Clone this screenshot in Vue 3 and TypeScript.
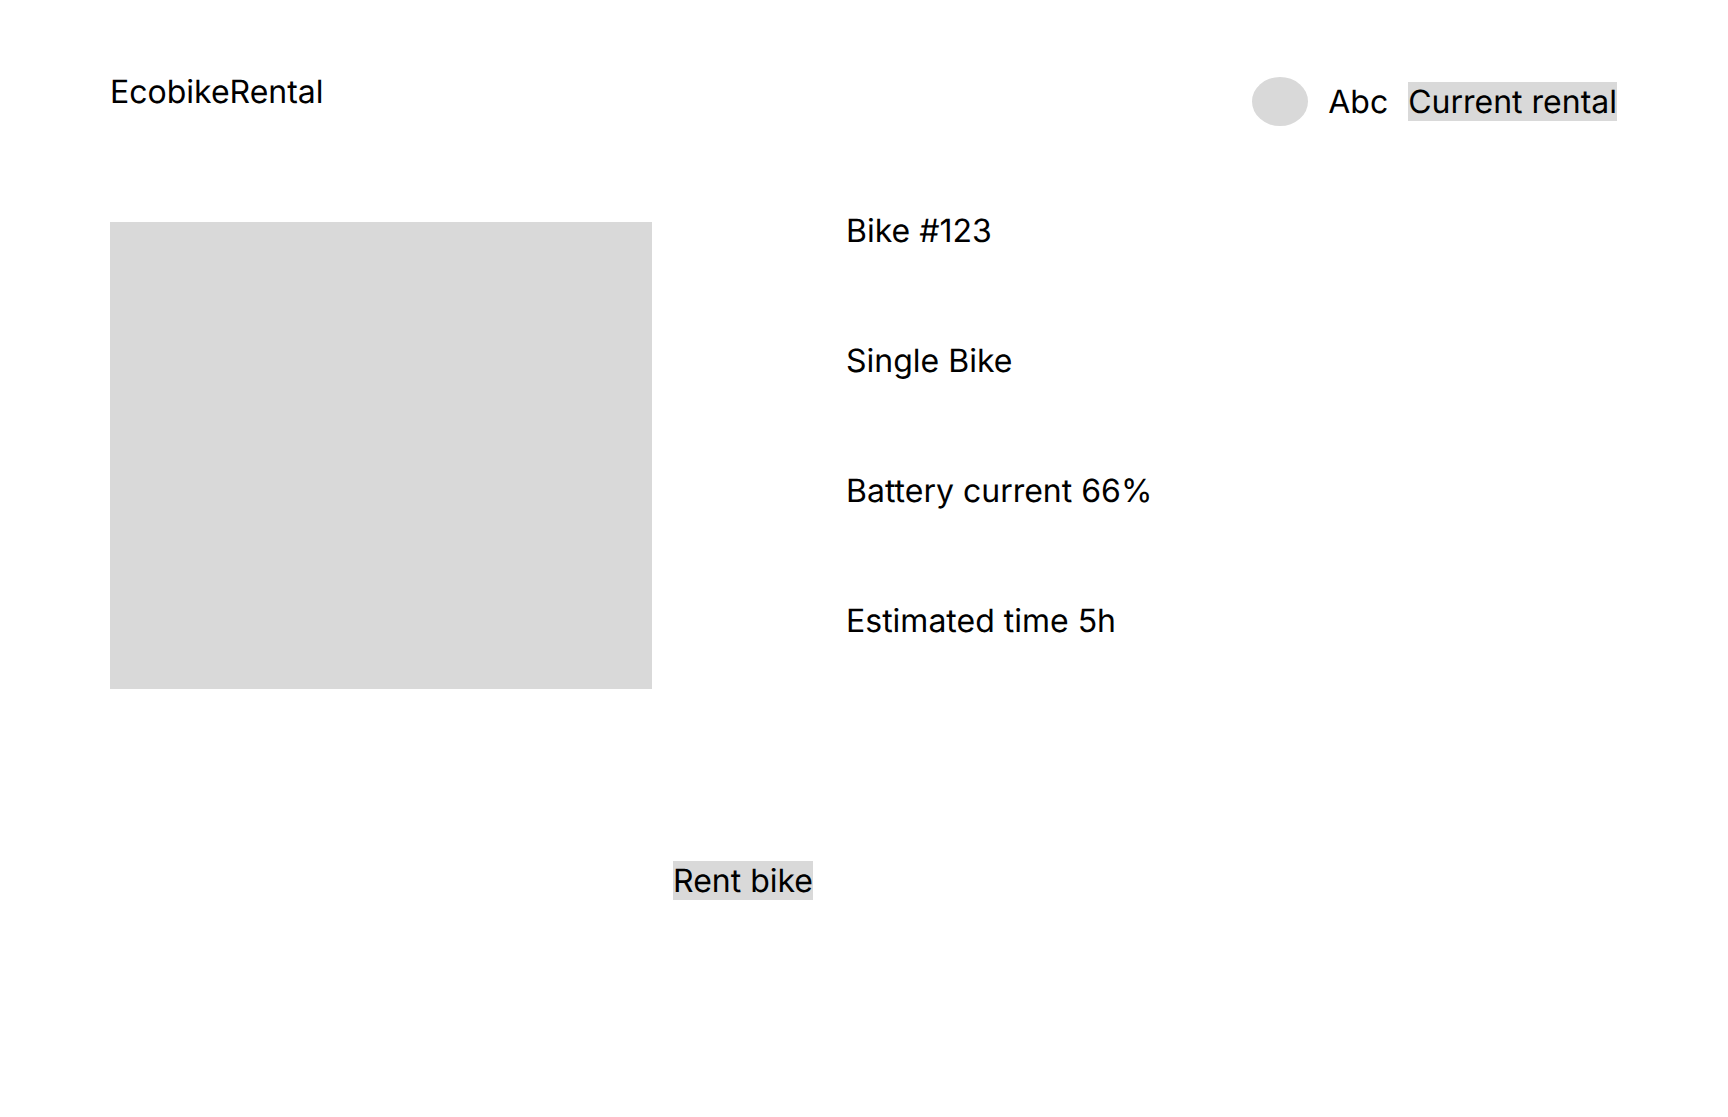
<script setup lang="ts">
interface Bike {
  name: string
  details: string[]
}

const userName: string = 'Abc'
const bike: Bike = {
  name: 'Bike #123',
  details: ['Single Bike', 'Battery current 66%', 'Estimated time 5h'],
}
</script>

<template>
  <div class="page">
    <header class="header">
      <div class="brand">EcobikeRental</div>
      <div class="account">
        <span class="avatar" aria-hidden="true"></span>
        <span>{{ userName }}</span>
        <button type="button" class="button">Current rental</button>
      </div>
    </header>

    <main>
      <section class="bike">
        <div class="photo" role="img" :aria-label="bike.name"></div>
        <div class="info">
          <h1 class="name">{{ bike.name }}</h1>
          <p v-for="detail in bike.details" :key="detail" class="detail">{{ detail }}</p>
        </div>
      </section>
      <div class="actions">
        <button type="button" class="button">Rent bike</button>
      </div>
    </main>
  </div>
</template>

<style>
body {
  margin: 0;
  background: #fff;
}
</style>

<style scoped>
.page {
  box-sizing: border-box;
  min-height: 100vh;
  padding: 72px 111px 72px 110px;
  color: #000;
  font-family: Inter, sans-serif;
  font-size: 32px;
  font-weight: 400;
  line-height: 39px;
  text-rendering: geometricPrecision;
}

.header {
  display: flex;
  justify-content: space-between;
  align-items: flex-start;
}

.account {
  display: flex;
  align-items: center;
  gap: 20px;
  padding-top: 5px;
}

.avatar {
  width: 56px;
  height: 49px;
  border-radius: 50%;
  background: #d9d9d9;
}

.button {
  padding: 0;
  border: 0;
  background: #d9d9d9;
  color: inherit;
  font: inherit;
  text-rendering: inherit;
  cursor: pointer;
}

.bike {
  display: grid;
  grid-template-columns: 542fr 771fr;
  column-gap: 194px;
  align-items: start;
  margin-top: 85px;
}

.photo {
  height: 467px;
  margin-top: 11px;
  background: #d9d9d9;
}

.info {
  display: flex;
  flex-direction: column;
  gap: 91px;
}

.name,
.detail {
  margin: 0;
  font: inherit;
}

.actions {
  margin-top: 172px;
  padding-left: 563px;
}
</style>
